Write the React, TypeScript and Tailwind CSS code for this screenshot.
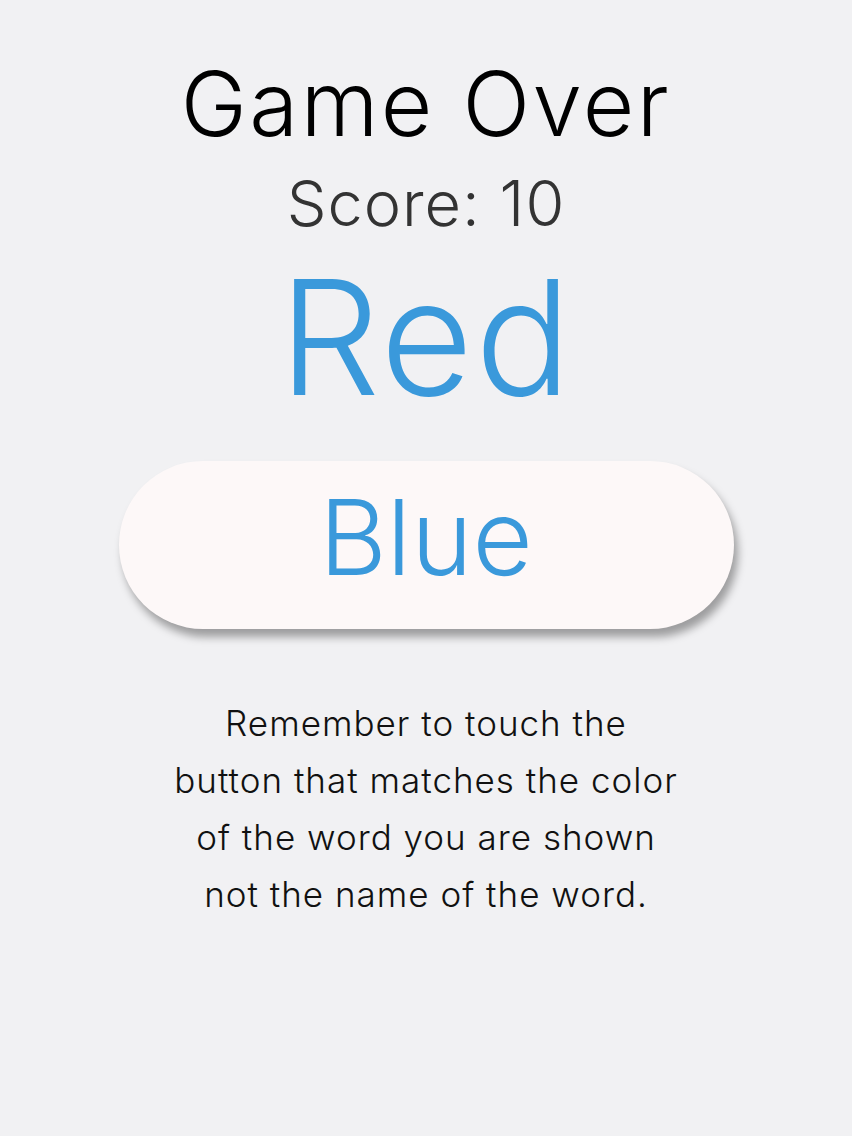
export default function App() {
  return (
    <div className="min-h-[1136px] w-full bg-[#f1f1f3] font-['Inter',sans-serif] font-light flex flex-col items-center">
      <h1 className="mt-[59px] text-[89px] leading-none text-black tracking-[2.5px]">Game Over</h1>
      <p className="mt-[24px] text-[63px] leading-none text-[#333] tracking-[1px]">Score: 10</p>
      <p className="mt-[22px] text-[160px] leading-none text-[#3a99db] tracking-[2px]">Red</p>
      <button className="mt-[44px] w-[615px] h-[168px] rounded-full bg-[#fdf8f8] shadow-[4px_8px_8px_rgba(0,0,0,0.35)] flex items-center justify-center pb-[16px]">
        <span className="text-[104px] leading-none text-[#3a99db]">Blue</span>
      </button>
      <p className="mt-[66px] text-center text-[35px] leading-[57px] text-[#111] tracking-[1px]">
        Remember to touch the
        <br />
        button that matches the color
        <br />
        of the word you are shown
        <br />
        not the name of the word.
      </p>
    </div>
  );
}
